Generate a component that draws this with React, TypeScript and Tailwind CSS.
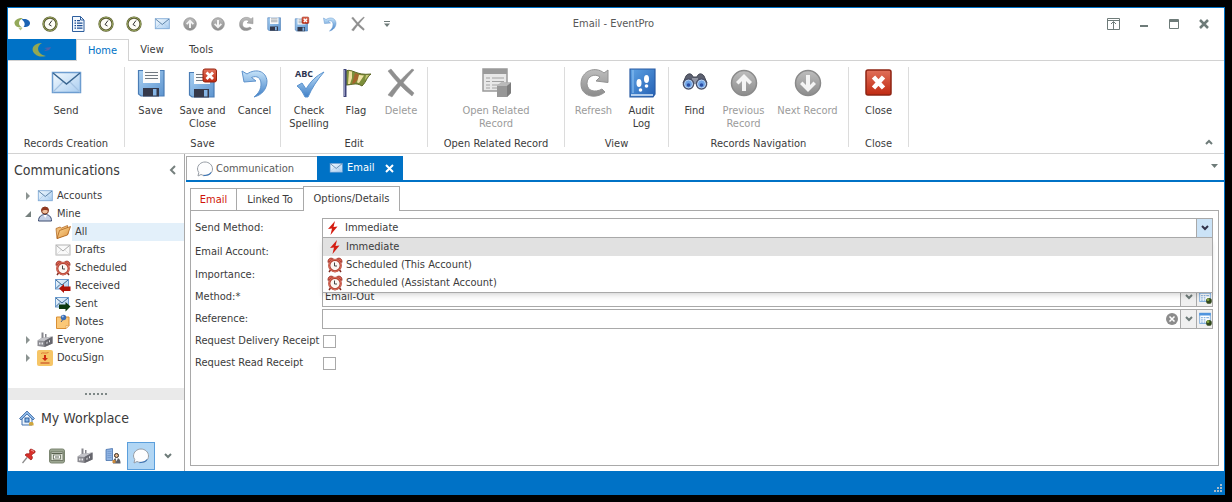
import type React from 'react'
import { useState } from 'react'

interface IconProps {
  size?: number
}

interface SvgProps extends IconProps {
  children: React.ReactNode
}

const Svg = ({ size = 16, children }: SvgProps) => (
  <svg
    width={size}
    height={size}
    viewBox="0 0 32 32"
    fill="none"
    className="shrink-0 overflow-visible"
    aria-hidden="true"
  >
    {children}
  </svg>
)

// Gradients shared by all the icons
const Gradients = () => (
  <svg width="0" height="0" className="absolute" aria-hidden="true">
    <defs>
      <linearGradient id="paper" x1="0" y1="0" x2="1" y2="1">
        <stop offset="0" stopColor="#f4fafe" />
        <stop offset="1" stopColor="#a9cdf0" />
      </linearGradient>
      <linearGradient id="blue" x1="0" y1="0" x2="0" y2="1">
        <stop offset="0" stopColor="#c6e3f9" />
        <stop offset="1" stopColor="#3f80c8" />
      </linearGradient>
      <linearGradient id="disk" x1="0" y1="0" x2="1" y2="1">
        <stop offset="0" stopColor="#a9d0f2" />
        <stop offset="1" stopColor="#5d94cf" />
      </linearGradient>
      <linearGradient id="book" x1="0" y1="0" x2="1" y2="1">
        <stop offset="0" stopColor="#5fa3e4" />
        <stop offset="1" stopColor="#2360b4" />
      </linearGradient>
      <linearGradient id="red" x1="0" y1="0" x2="0" y2="1">
        <stop offset="0" stopColor="#e0705a" />
        <stop offset="1" stopColor="#c02a12" />
      </linearGradient>
      <linearGradient id="gray" x1="0" y1="0" x2="0" y2="1">
        <stop offset="0" stopColor="#bdbdbd" />
        <stop offset="1" stopColor="#8c8c8c" />
      </linearGradient>
      <linearGradient id="folder" x1="0" y1="0" x2="1" y2="1">
        <stop offset="0" stopColor="#fcdc9e" />
        <stop offset="1" stopColor="#e0923a" />
      </linearGradient>
    </defs>
  </svg>
)

const MailIcon = ({ size }: IconProps) => (
  <Svg size={size}>
    <rect x="2.5" y="5.500" width="28" height="20" fill="url(#paper)" stroke="#6d9dd0" strokeWidth="1.500" />
    <path d="M3 25 L13 15 M30 25 L20 15" stroke="#a5c3e2" strokeWidth="1.200" />
    <path d="M3 6 L16.500 17 L30 6" stroke="#3a6690" strokeWidth="1.500" />
  </Svg>
)

const DraftIcon = ({ size }: IconProps) => (
  <Svg size={size}>
    <rect x="2" y="6" width="28" height="20" fill="#fafafa" stroke="#b4b4b4" strokeWidth="2" />
    <path d="M3 25 L13 15 M29 25 L19 15" stroke="#dcdcdc" strokeWidth="1.500" />
    <path d="M3 7 L16 18 L29 7" stroke="#aaa" strokeWidth="2" />
  </Svg>
)

const ReceivedIcon = ({ size }: IconProps) => (
  <Svg size={size}>
    <rect x="1" y="3" width="26" height="19" fill="url(#paper)" stroke="#6d9dd0" strokeWidth="2" />
    <path d="M2 4 L14 14 L26 4 M2 21 L10 13" stroke="#3a6690" strokeWidth="2" />
    <path d="M8 21 L18 12 V17 H31 V26 H18 V30 Z" fill="#b01208" />
  </Svg>
)

const SentIcon = ({ size }: IconProps) => (
  <Svg size={size}>
    <rect x="1" y="3" width="26" height="19" fill="url(#paper)" stroke="#6d9dd0" strokeWidth="2" />
    <path d="M2 4 L14 14 L26 4 M2 21 L10 13" stroke="#3a6690" strokeWidth="2" />
    <path d="M31 21 L21 12 V17 H8 V26 H21 V31 Z" fill="#0c3a10" />
  </Svg>
)

const SaveIcon = ({ size }: IconProps) => (
  <Svg size={size}>
    <path d="M3.500 3.500 H29 V29 H6 L3.500 27 Z" fill="url(#disk)" stroke="#4a7cb5" strokeWidth="1.200" />
    <rect x="8" y="3" width="17" height="13" fill="#fbfbfb" />
    <path d="M10 5.500 H23 M10 8.500 H23 M10 11.500 H23" stroke="#707880" strokeWidth="1.100" />
    <rect x="8" y="21" width="16" height="8.500" fill="#34384a" />
    <rect x="18" y="22" width="3.500" height="6.500" fill="#86b6e6" />
  </Svg>
)

const SaveCloseIcon = ({ size }: IconProps) => (
  <Svg size={size}>
    <path d="M2.500 5.500 H27 V30 H5 L2.500 28 Z" fill="url(#disk)" stroke="#4a7cb5" strokeWidth="1.200" />
    <rect x="7" y="5" width="16" height="12" fill="#fbfbfb" />
    <path d="M9 7.500 H18 M9 10.500 H18 M9 13.500 H18" stroke="#707880" strokeWidth="1.100" />
    <rect x="7" y="22" width="15" height="8.500" fill="#34384a" />
    <rect x="17" y="23" width="3.500" height="6.500" fill="#86b6e6" />
    <rect x="16" y="2" width="13.500" height="13" rx="2" fill="url(#red)" stroke="#96230f" />
    <path d="M19.500 5.500 L26 12 M26 5.500 L19.500 12" stroke="#fff" strokeWidth="2.800" />
  </Svg>
)

const UndoIcon = ({ size }: IconProps) => (
  <Svg size={size}>
    <path
      d="M3 4 L5 15 L17 14 L12.500 10.500 C18 8 22 11 22 17 C22 22 20 26 15 30 C23 28 28 22 28 14 C27 4 17 1 8 7 Z"
      fill="url(#blue)"
      stroke="#5f93cc"
      strokeWidth="1"
      strokeLinejoin="round"
    />
  </Svg>
)

const SpellIcon = ({ size }: IconProps) => (
  <Svg size={size}>
    <text x="2" y="10" fontSize="9" fontWeight="700" fill="#2c3350" fontFamily="'Open Sans', sans-serif">
      ABC
    </text>
    <path
      d="M4 19 L9 16 L13 22 C18 14 23 9 31 5 C24 13 19 21 15 30 L12 30 C10 26 8 22 4 19 Z"
      fill="url(#blue)"
      stroke="#5b93cf"
    />
  </Svg>
)

const FlagIcon = ({ size }: IconProps) => (
  <Svg size={size}>
    <path d="M6 4 C12 1 16 9 31 7 C26 11 27 14 22 19 C16 15 12 18 6 18 Z" fill="#7c8f3a" stroke="#5d6524" />
    <path d="M9 4 L12 4.500 V11 L10 17 H8 Z" fill="#efe0a0" />
    <path d="M15 6 L19 7.500 L18 12 L15 16 L12 17 Z" fill="#a4652c" />
    <path d="M19 8 L24 8.500 L19 16 L17 15.500 Z" fill="#f1e3a8" />
    <path d="M26 8 L29 8 L25 13 Z" fill="#c6c878" />
    <path d="M5 2 V30" stroke="#3f4478" strokeWidth="3" />
    <path d="M4.500 3 V29" stroke="#9094bd" />
  </Svg>
)

const CrossIcon = ({ size }: IconProps) => (
  <Svg size={size}>
    <path
      d="M3 4 L6 2 C13 11 21 19 29 26 L27 29 C18 22 10 13 3 4 Z M3 28 C9 20 17 11 27 2 L29 3 C21 12 14 20 7 30 Z"
      fill="#8f8f8f"
      stroke="#8a8a8a"
      strokeWidth=".5"
    />
  </Svg>
)

const RelatedIcon = ({ size }: IconProps) => (
  <Svg size={size}>
    <rect x="3" y="2" width="24" height="22" fill="#e8e8e8" stroke="#9a9a9a" strokeWidth="1.500" />
    <rect x="3" y="2" width="24" height="5" fill="#9a9a9a" />
    <path
      d="M6 11 H10 M12 11 H24 M6 14.500 H10 M12 14.500 H24 M6 18 H10 M12 18 H24 M6 21 H10 M12 21 H20"
      stroke="#a2a2a2"
      strokeWidth="1.200"
    />
    <path d="M17 19 L21 15.500 H31 V26 L27 30 H17 Z" fill="#979797" />
    <path d="M17 19 L21 15.500 H31 L27 19 Z" fill="#bababa" />
    <path d="M27 19 L31 15.500 V26 L27 30 Z" fill="#7c7c7c" />
  </Svg>
)

const RefreshIcon = ({ size }: IconProps) => (
  <Svg size={size}>
    <path
      d="M26 6 C18 -1 3 3 3 17 C3 29 17 33 27 25 L24 22 C17 26 9 24 9 16.500 C9 9 17 6 22 10 L18 14 L30 15.500 L30 3 Z"
      fill="url(#gray)"
      stroke="#929292"
      strokeWidth="1"
      strokeLinejoin="round"
    />
  </Svg>
)

const AuditIcon = ({ size }: IconProps) => (
  <Svg size={size}>
    <path d="M4 2 H29 V27 L27 30 H4 Z" fill="url(#book)" stroke="#2a5ca4" strokeWidth="1.200" />
    <path d="M5 28 H27" stroke="#dcebfa" strokeWidth="1.500" />
    <path d="M7 3 V26" stroke="#86bdf0" strokeWidth="1.200" />
    <ellipse cx="13" cy="16" rx="2.500" ry="4" fill="#fff" />
    <ellipse cx="14.500" cy="23" rx="1.800" ry="1.800" fill="#fff" />
    <ellipse cx="20.500" cy="12" rx="2.500" ry="4" fill="#fff" />
    <ellipse cx="20.500" cy="19" rx="1.800" ry="1.800" fill="#fff" />
  </Svg>
)

const FindIcon = ({ size }: IconProps) => (
  <Svg size={size}>
    <path d="M7 9 C9 6 13 6 14 10 H18 C19 6 23 6 25 9 L28 16 H4 Z" fill="#5c6070" stroke="#444854" />
    <rect x="13" y="11" width="6" height="5" fill="#9296a4" />
    <circle cx="9.500" cy="17" r="5.800" fill="#4a5068" />
    <circle cx="22.500" cy="17" r="5.800" fill="#4a5068" />
    <circle cx="9.500" cy="17" r="4" fill="#6fa3e6" stroke="#b9d4f4" />
    <circle cx="22.500" cy="17" r="4" fill="#6fa3e6" stroke="#b9d4f4" />
    <circle cx="9.500" cy="18" r="1.800" fill="#2c4fa5" />
    <circle cx="22.500" cy="18" r="1.800" fill="#2c4fa5" />
  </Svg>
)

const UpIcon = ({ size }: IconProps) => (
  <Svg size={size}>
    <circle cx="16" cy="16" r="12.500" fill="url(#gray)" stroke="#8a8a8a" strokeWidth="1.500" />
    <path d="M16 7 L24 15 L21.500 17.500 L18 14 V24 H14 V14 L10.500 17.500 L8 15 Z" fill="#f4f4f4" />
  </Svg>
)

const DownIcon = ({ size }: IconProps) => (
  <Svg size={size}>
    <circle cx="16" cy="16" r="12.500" fill="url(#gray)" stroke="#8a8a8a" strokeWidth="1.500" />
    <path d="M16 25 L24 17 L21.500 14.500 L18 18 V8 H14 V18 L10.500 14.500 L8 17 Z" fill="#f4f4f4" />
  </Svg>
)

const CloseRedIcon = ({ size }: IconProps) => (
  <Svg size={size}>
    <rect x="3" y="3" width="25" height="25" rx="2" fill="url(#red)" stroke="#8e2413" strokeWidth="1.500" />
    <path d="M10.500 10 L20.500 21 M20.500 10 L10.500 21" stroke="#fff" strokeWidth="4.500" />
  </Svg>
)

const ClockIcon = ({ size }: IconProps) => (
  <Svg size={size}>
    <circle cx="16" cy="16" r="13" fill="#fdfdf6" stroke="#5b5a34" strokeWidth="4.500" />
    <circle cx="16" cy="16" r="13.500" stroke="#94a35a" strokeWidth="2" />
    <path d="M20 9 L14 17 L19 20" stroke="#333" strokeWidth="2" />
  </Svg>
)

const ReportIcon = ({ size }: IconProps) => (
  <Svg size={size}>
    <path d="M5 1 H21 L28 8 V31 H5 Z" fill="#f3f8fe" stroke="#2e5f9e" strokeWidth="2" />
    <path d="M21 1 V8 H28" stroke="#2e5f9e" strokeWidth="2" />
    <path
      d="M9 9 H12 M14 9 H20 M9 14 H12 M14 14 H25 M9 19 H12 M14 19 H25 M9 24 H12 M14 24 H25"
      stroke="#1d4d92"
      strokeWidth="2.500"
    />
  </Svg>
)

const LogoIcon = ({ size }: IconProps) => (
  <Svg size={size}>
    <path d="M18 4 C8 3 0 9 1 15 C2 21 8 24 17 23 C9 20 6 10 18 4 Z" fill="#93a95a" />
    <path d="M15 7 C23 4 32 8 32 14 C32 20 26 23 19 22 C23 18 22 11 15 7 Z" fill="#1c63b4" />
    <path d="M9 24 L17 24 L13 29 Z" fill="#b8c58a" />
  </Svg>
)

const AlarmIcon = ({ size }: IconProps) => (
  <Svg size={size}>
    <path d="M2 11 C1 3 8 0 13 4 Z M30 11 C31 3 24 0 19 4 Z" fill="#d9604e" stroke="#8f2a20" strokeWidth="1.500" />
    <path d="M7 26 L4 30 M25 26 L28 30" stroke="#7e2a20" strokeWidth="3" />
    <circle cx="16" cy="17" r="11.500" fill="#fbf6f2" stroke="#b03a2a" strokeWidth="4.500" />
    <circle cx="16" cy="17" r="12" stroke="#e98a78" strokeWidth="1.500" />
    <path d="M15 11 V18 H20" stroke="#444" strokeWidth="2" />
  </Svg>
)

const PersonIcon = ({ size }: IconProps) => (
  <Svg size={size}>
    <path d="M3 30 C3 21 9 17 16 17 C24 17 29 21 29 30 Z" fill="#c3cfe4" stroke="#3c4c70" strokeWidth="2" />
    <path d="M13 18 L16.500 24 L20 18 Z" fill="#fff" />
    <circle cx="16" cy="9" r="7" fill="#f0bf9c" stroke="#7a3a22" strokeWidth="2" />
    <path d="M9 11 C7 -1 25 -1 23 10 C20 8 14 6 9 11 Z" fill="#943a20" />
  </Svg>
)

const FolderIcon = ({ size }: IconProps) => (
  <Svg size={size}>
    <path d="M2 9 L10 6 L13 8 L25 3 L26 20 L4 29 Z" fill="#f0bd78" stroke="#b0661e" strokeWidth="1.500" />
    <path d="M9 13 L31 5 L25 22 L4 29 Z" fill="url(#folder)" stroke="#a85c16" strokeWidth="1.500" />
  </Svg>
)

const NoteIcon = ({ size }: IconProps) => (
  <Svg size={size}>
    <path d="M3 6 H28 V23 L22 29 H3 Z" fill="#fbc877" stroke="#d98f34" strokeWidth="2" />
    <path d="M28 23 H22 V29 Z" fill="#fff0d2" stroke="#d98f34" />
    <circle cx="17" cy="7" r="5.500" fill="#3c6db4" />
    <circle cx="15.500" cy="5" r="2" fill="#a8c8ee" />
    <path d="M12 16 L15 12" stroke="#47587a" strokeWidth="2" />
  </Svg>
)

const FactoryIcon = ({ size }: IconProps) => (
  <Svg size={size}>
    <path d="M9 1 H13 V15 H9 Z M16 4 H19 V14 H16 Z" fill="#85858b" />
    <path d="M1 17 L9 12 L31 9 V23 L15 30 L1 28 Z" fill="#8b8b91" />
    <path d="M1 17 L9 12 L31 9 L15 18 Z" fill="#c4c4c9" />
    <path d="M15 18 L31 9 V23 L15 30 Z" fill="#66666d" />
    <path d="M4 21 H7 V25 H4 Z M9 21 H12 V25 H9 Z M19 20 L21 19 V23 L19 24 Z M24 17 L26 16 V20 L24 21 Z" fill="#e6e6ea" />
  </Svg>
)

const DocuSignIcon = ({ size }: IconProps) => (
  <Svg size={size}>
    <rect x="0" y="0" width="32" height="32" rx="4" fill="#f6c566" />
    <path d="M8 7 C12 4 16 8 23 5" stroke="#d1622a" strokeWidth="1.500" />
    <path d="M14 10 H18 V16 H22 L16 22 L10 16 H14 Z" fill="#d02a12" />
    <path d="M7 26 H25" stroke="#c03a1a" strokeWidth="2" />
  </Svg>
)

const HouseIcon = ({ size }: IconProps) => (
  <Svg size={size}>
    <path d="M6 16 V30 H26 V16 L16 6 Z" fill="#eaf3fc" stroke="#4473ae" strokeWidth="2" />
    <path d="M1 17 L16 2 L31 17 L28 20 L16 8 L4 20 Z" fill="#8bb6e6" stroke="#2d5d9c" strokeWidth="1.500" />
    <rect x="12" y="16" width="8" height="8" fill="#86b6e6" stroke="#2d5d9c" strokeWidth="2" />
    <path d="M20 31 C19 25 22 23 25 24 C28 23 30 26 29 31 Z" fill="#cfa63c" />
  </Svg>
)

const PinIcon = ({ size }: IconProps) => (
  <Svg size={size}>
    <path d="M3 30 L12 19" stroke="#8b8b8b" strokeWidth="2.500" />
    <path
      d="M8 14 C10 11 13 11 16 12 L18 8 C16 6 17 3 20 2 L28 6 C29 9 27 11 24 11 L21 15 C24 18 23 22 20 24 Z"
      fill="#d9302a"
      stroke="#9e1a16"
      strokeWidth="1.500"
    />
    <path d="M20 4 L26 7" stroke="#f59b95" strokeWidth="2" />
  </Svg>
)

const DrawerIcon = ({ size }: IconProps) => (
  <Svg size={size}>
    <rect x="1" y="2" width="30" height="28" rx="4" fill="#9ba591" stroke="#7c8672" strokeWidth="2" />
    <rect x="4" y="8" width="24" height="17" fill="#dfe3d8" stroke="#59624f" strokeWidth="1.500" />
    <rect x="9" y="14" width="14" height="8" fill="#fff" stroke="#59624f" strokeWidth="1.500" />
    <path d="M5 11 H27 M12 18 H20" stroke="#59624f" strokeWidth="2" />
  </Svg>
)

const BuildingIcon = ({ size }: IconProps) => (
  <Svg size={size}>
    <path d="M2 3 L15 1 V25 H2 Z" fill="#8fb3e2" stroke="#3f6ba8" strokeWidth="1.500" />
    <path d="M5 7 H13 M5 11 H13 M5 15 H13 M5 19 H13" stroke="#5f87c0" strokeWidth="1" />
    <circle cx="23" cy="15" r="4" fill="#e9b78c" stroke="#33261c" strokeWidth="2" />
    <path d="M16 31 C16 23 19 20 23 20 C28 20 31 23 31 31 Z" fill="#5d6068" />
    <path d="M21 20 L23 27 L26 20 Z" fill="#fff" />
    <rect x="15" y="24" width="6" height="6" fill="#c8873a" />
  </Svg>
)

const BubbleIcon = ({ size }: IconProps) => (
  <Svg size={size}>
    <path
      d="M16 2 C24 2 31 8 31 16 C31 24 24 29 16 29 C13 29 10 28 8 27 L2 30 L3.500 23 C2 21 1 18 1 16 C1 8 8 2 16 2 Z"
      fill="#fdfdfe"
      stroke="#979da5"
      strokeWidth="2"
    />
    <path d="M28 23 C25 28 20 29 13 29" stroke="#3c76b8" strokeWidth="2.500" />
  </Svg>
)

const BoltIcon = ({ size }: IconProps) => (
  <Svg size={size}>
    <path d="M20 2 L6 18 L14 17 L11 30 L25 13 L17 14 Z" fill="#d41c10" />
  </Svg>
)

const RecordIcon = ({ size }: IconProps) => (
  <Svg size={size}>
    <rect x="4" y="3" width="24" height="23" fill="#fff" stroke="#6da2d8" strokeWidth="2" />
    <rect x="3" y="2" width="26" height="6" fill="#4f94de" />
    <path d="M7 13 H11 M13 13 H17 M19 13 H25 M7 18 H11 M13 18 H17 M7 23 H11 M13 23 H17" stroke="#8ab4e0" strokeWidth="3" />
    <circle cx="25" cy="25" r="6.500" fill="#32481c" />
    <circle cx="23" cy="22" r="3" fill="#86a840" />
  </Svg>
)

const Chevron = ({ color = '#6e7b79' }: { color?: string }) => (
  <svg width="8" height="6" viewBox="0 0 8 6" fill="none" aria-hidden="true">
    <path d="M1 1 L4 4 L7 1" stroke={color} strokeWidth="2" />
  </svg>
)

const quickItems = [
  { label: 'EventPro', icon: LogoIcon },
  { label: 'Recent', icon: ClockIcon },
  { label: 'Report', icon: ReportIcon },
  { label: 'Reminders', icon: ClockIcon },
  { label: 'Schedule', icon: ClockIcon },
  { label: 'Send', icon: MailIcon },
  { label: 'Previous record', icon: UpIcon },
  { label: 'Next record', icon: DownIcon },
  { label: 'Refresh', icon: RefreshIcon },
  { label: 'Save', icon: SaveIcon },
  { label: 'Save and close', icon: SaveCloseIcon },
  { label: 'Cancel', icon: UndoIcon },
  { label: 'Delete', icon: CrossIcon },
]

interface RibbonItem {
  label: string
  icon: React.FC<IconProps>
  width: string
  disabled?: boolean
}

const ribbonGroups: { title: string; width: string; items: RibbonItem[] }[] = [
  { title: 'Records Creation', width: 'w-[117px]', items: [{ label: 'Send', icon: MailIcon, width: 'w-12' }] },
  {
    title: 'Save',
    width: 'w-[156px]',
    items: [
      { label: 'Save', icon: SaveIcon, width: 'w-[46px]' },
      { label: 'Save and Close', icon: SaveCloseIcon, width: 'w-[58px]' },
      { label: 'Cancel', icon: UndoIcon, width: 'w-[46px]' },
    ],
  },
  {
    title: 'Edit',
    width: 'w-[147px]',
    items: [
      { label: 'Check Spelling', icon: SpellIcon, width: 'w-[54px]' },
      { label: 'Flag', icon: FlagIcon, width: 'w-10' },
      { label: 'Delete', icon: CrossIcon, width: 'w-[50px]', disabled: true },
    ],
  },
  {
    title: 'Open Related Record',
    width: 'w-[137px]',
    items: [{ label: 'Open Related Record', icon: RelatedIcon, width: 'w-20', disabled: true }],
  },
  {
    title: 'View',
    width: 'w-[104px]',
    items: [
      { label: 'Refresh', icon: RefreshIcon, width: 'w-[50px]', disabled: true },
      { label: 'Audit Log', icon: AuditIcon, width: 'w-[46px]' },
    ],
  },
  {
    title: 'Records Navigation',
    width: 'w-[180px]',
    items: [
      { label: 'Find', icon: FindIcon, width: 'w-10' },
      { label: 'Previous Record', icon: UpIcon, width: 'w-[58px]', disabled: true },
      { label: 'Next Record', icon: DownIcon, width: 'w-[70px]', disabled: true },
    ],
  },
  { title: 'Close', width: 'w-[60px]', items: [{ label: 'Close', icon: CloseRedIcon, width: 'w-12' }] },
]

const mineItems = [
  { label: 'All', icon: FolderIcon },
  { label: 'Drafts', icon: DraftIcon },
  { label: 'Scheduled', icon: AlarmIcon },
  { label: 'Received', icon: ReceivedIcon },
  { label: 'Sent', icon: SentIcon },
  { label: 'Notes', icon: NoteIcon },
]

const sendMethods = [
  { label: 'Immediate', icon: BoltIcon },
  { label: 'Scheduled (This Account)', icon: AlarmIcon },
  { label: 'Scheduled (Assistant Account)', icon: AlarmIcon },
]

const workplaceItems = [
  { label: 'Pinned', icon: PinIcon },
  { label: 'Files', icon: DrawerIcon },
  { label: 'Venues', icon: FactoryIcon },
  { label: 'Contacts', icon: BuildingIcon },
  { label: 'Communications', icon: BubbleIcon },
]

const TitleBar = () => (
  <header className="flex h-[31px] items-center">
    <div className="flex flex-1 items-center">
      {quickItems.map(({ label, icon: Icon }) => (
        <button key={label} aria-label={label} className="flex w-7 justify-center">
          <Icon />
        </button>
      ))}
      <button aria-label="Customize toolbar" className="flex w-[30px] justify-center">
        <svg width="6" height="6" viewBox="0 0 6 6" aria-hidden="true">
          <path d="M0 0 H6 V1 H0 Z M0 2.500 H6 L3 6 Z" fill="#6e7b79" />
        </svg>
      </button>
    </div>
    <h1 className="text-[#585858]">Email - EventPro</h1>
    <div className="flex flex-1 items-center justify-end pr-[5px] text-[#6e7b79]">
      <button aria-label="Ribbon display options" className="flex w-8 justify-center">
        <svg width="13" height="12" viewBox="0 0 13 12" fill="none" stroke="currentColor" aria-hidden="true">
          <path d="M.5 .5 H12.500 V11.500 H.5 Z M.5 2.500 H12.500 M6.500 11 V4 M4 6 L6.500 3.500 L9 6" />
        </svg>
      </button>
      <button aria-label="Minimize" className="flex w-[30px] justify-center">
        <svg width="8" height="10" viewBox="0 0 8 10" aria-hidden="true">
          <path d="M0 6 H8 V8 H0 Z" fill="currentColor" />
        </svg>
      </button>
      <button aria-label="Maximize" className="flex w-[30px] justify-center">
        <svg width="10" height="10" viewBox="0 0 10 10" fill="none" stroke="currentColor" aria-hidden="true">
          <path d="M.5 .5 H9.500 V9.500 H.5 Z M0 1.500 H10 M0 2.500 H10" />
        </svg>
      </button>
      <button aria-label="Close window" className="flex w-[30px] justify-center">
        <svg width="10" height="10" viewBox="0 0 10 10" fill="none" stroke="currentColor" aria-hidden="true">
          <path d="M1 1 L9 9 M9 1 L1 9" strokeWidth="2.500" />
        </svg>
      </button>
    </div>
  </header>
)

const Ribbon = () => (
  <>
    <nav className="flex h-[22px] border-b border-[#d2d2d2]">
      <button aria-label="File" className="flex w-[68px] items-center justify-center bg-[#0072c6]">
        <svg width="20" height="16" viewBox="0 0 20 16" aria-hidden="true">
          <path d="M10 1 C1 1 -2 8 3 12 C6 15 10 15 14 14 C6 13 3 5 10 1 Z" fill="#93a852" />
          <path d="M12 6 L19 5 C18 8 16 9 12 9 L15 7 Z" fill="#4a62ae" />
        </svg>
      </button>
      <button className="-mb-px w-[53px] border border-b-0 border-[#d2d2d2] bg-white text-[#0072c6]">Home</button>
      <button className="w-[46px]">View</button>
      <button className="w-[52px]">Tools</button>
    </nav>
    <div className="flex h-[93px] border-b border-[#d2d2d2] pt-[6px]">
      {ribbonGroups.map((group) => (
        <section
          key={group.title}
          className={`flex h-20 shrink-0 flex-col items-center justify-between border-r border-[#dcdcdc] ${group.width}`}
        >
          <div className="flex">
            {group.items.map(({ label, icon: Icon, width, disabled }) => (
              <button
                key={label}
                disabled={disabled}
                className={`flex flex-col items-center leading-[13px] ${width} ${disabled ? 'text-[#9b9b9b]' : ''}`}
              >
                <Icon size={32} />
                <span className="pt-[5px]">{label}</span>
              </button>
            ))}
          </div>
          <h2 className="leading-[6px]">{group.title}</h2>
        </section>
      ))}
      <button aria-label="Collapse ribbon" className="mt-auto mr-[11px] mb-2 ml-auto rotate-180">
        <Chevron />
      </button>
    </div>
  </>
)

const TreeArrow = ({ open }: { open?: boolean }) => (
  <svg width="6" height="8" viewBox="0 0 6 8" className="shrink-0" aria-hidden="true">
    {open ? <path d="M6 1 V7 H0 Z" fill="#76807e" /> : <path d="M1 0 L5 4 L1 8 Z" fill="#8b9391" />}
  </svg>
)

const TreeRow = ({ label, icon: Icon, open }: { label: string; icon: React.FC<IconProps>; open?: boolean }) => (
  <button className="flex h-[18px] w-full items-center pl-[17px]">
    <TreeArrow open={open} />
    <span className="mr-1 ml-[6px]">
      <Icon />
    </span>
    {label}
  </button>
)

const Sidebar = () => {
  const [selected, setSelected] = useState('All')

  return (
    <aside className="flex w-[177px] shrink-0 flex-col border-r border-[#a9a9a9]">
      <div className="flex h-8 items-center justify-between pr-2 pl-[6px]">
        <h2 className="text-[14px]">Communications</h2>
        <button aria-label="Collapse panel">
          <svg width="7" height="10" viewBox="0 0 7 10" fill="none" aria-hidden="true">
            <path d="M6 1 L2 5 L6 9" stroke="#76807e" strokeWidth="2" />
          </svg>
        </button>
      </div>
      <ul className="flex-1 pt-px">
        <li>
          <TreeRow label="Accounts" icon={MailIcon} />
        </li>
        <li>
          <TreeRow label="Mine" icon={PersonIcon} open />
          <ul>
            {mineItems.map(({ label, icon: Icon }) => (
              <li key={label} className="flex items-center pl-[47px]">
                <Icon />
                <button
                  className={`ml-px h-[18px] flex-1 pl-[3px] text-left ${selected === label ? 'bg-[#e3f0fa]' : ''}`}
                  onClick={() => setSelected(label)}
                >
                  {label}
                </button>
              </li>
            ))}
          </ul>
        </li>
        <li>
          <TreeRow label="Everyone" icon={FactoryIcon} />
        </li>
        <li>
          <TreeRow label="DocuSign" icon={DocuSignIcon} />
        </li>
      </ul>
      <div className="flex h-3 items-center justify-center gap-[2px] bg-[#eaeaea]">
        {[0, 1, 2, 3, 4, 5].map((dot) => (
          <span key={dot} className="size-[2px] bg-[#7d8786]" />
        ))}
      </div>
      <div className="flex h-9 items-center gap-[6px] pl-[11px]">
        <HouseIcon />
        <h2 className="text-[14px]">My Workplace</h2>
      </div>
      <div className="flex h-[35px] items-end pb-px pl-[7px]">
        {workplaceItems.map(({ label, icon: Icon }) => (
          <button
            key={label}
            aria-label={label}
            className={`flex size-7 items-center justify-center border ${
              label === 'Communications' ? 'border-[#5b9fdc] bg-[#b1d6f4]' : 'border-transparent'
            }`}
          >
            <Icon />
          </button>
        ))}
        <button aria-label="More" className="flex h-7 w-[26px] items-center justify-center">
          <Chevron />
        </button>
      </div>
    </aside>
  )
}

const DropButton = ({ label, active }: { label: string; active?: boolean }) => (
  <button
    type="button"
    aria-label={label}
    className={`flex w-4 shrink-0 items-center justify-center border-l border-[#a9a9a9] ${
      active ? 'bg-[#cbe3f7]' : 'bg-[#f0f0f0]'
    }`}
  >
    <Chevron color={active ? '#32324a' : '#6e7b79'} />
  </button>
)

const RecordButton = ({ label }: { label: string }) => (
  <button
    type="button"
    aria-label={label}
    className="flex w-4 shrink-0 items-center justify-center border-l border-[#a9a9a9] bg-[#f0f0f0]"
  >
    <RecordIcon size={14} />
  </button>
)

interface FieldProps {
  id: string
  label: string
  tall?: boolean
  children: React.ReactNode
}

const Field = ({ id, label, tall, children }: FieldProps) => (
  <div className={`flex items-center ${tall ? 'h-6' : 'h-[22px]'}`}>
    <label htmlFor={id} className="w-[127px] shrink-0 whitespace-nowrap">
      {label}
    </label>
    {children}
  </div>
)

const EmailOptions = () => {
  const [method, setMethod] = useState('Immediate')
  const [reference, setReference] = useState('')
  const box = 'relative flex h-5 min-w-0 flex-1 border border-[#a9a9a9] bg-white'

  return (
    <form className="flex-1 border border-[#a9a9a9] py-[5px] pr-[5px] pl-1">
      <Field id="send-method" label="Send Method:" tall>
        <div className={box}>
          <span className="flex items-center pr-1 pl-[2px]">
            <BoltIcon />
          </span>
          <select
            id="send-method"
            className="flex-1 appearance-none outline-none"
            value={method}
            onChange={(e) => setMethod(e.target.value)}
          >
            {sendMethods.map(({ label }) => (
              <option key={label}>{label}</option>
            ))}
          </select>
          <DropButton label="Open send methods" active />
          {/* Opened list of send methods */}
          <ul className="absolute -inset-x-px top-[18px] z-10 border border-[#a9a9a9] bg-white shadow-md">
            {sendMethods.map(({ label, icon: Icon }) => (
              <li
                key={label}
                className={`flex h-[18px] items-center gap-[3px] pl-1 ${label === method ? 'bg-[#e1e1e1]' : ''}`}
                onClick={() => setMethod(label)}
              >
                <Icon />
                {label}
              </li>
            ))}
          </ul>
        </div>
      </Field>
      <Field id="account" label="Email Account:" tall>
        <div className={box}>
          <input id="account" className="min-w-0 flex-1 outline-none" />
        </div>
      </Field>
      <Field id="importance" label="Importance:">
        <div className={box}>
          <input id="importance" className="min-w-0 flex-1 outline-none" />
        </div>
      </Field>
      <Field id="method" label="Method:*">
        <div className={box}>
          <select id="method" className="flex-1 appearance-none pl-[2px] outline-none">
            <option>Email-Out</option>
          </select>
          <DropButton label="Open methods" />
          <RecordButton label="Edit method" />
        </div>
      </Field>
      <Field id="reference" label="Reference:">
        <div className={box}>
          <input
            id="reference"
            className="min-w-0 flex-1 pl-[2px] outline-none"
            value={reference}
            onChange={(e) => setReference(e.target.value)}
          />
          <button type="button" aria-label="Clear reference" className="px-[2px]" onClick={() => setReference('')}>
            <svg width="12" height="12" viewBox="0 0 12 12" aria-hidden="true">
              <circle cx="6" cy="6" r="6" fill="#8c8c8c" />
              <path d="M3.500 3.500 L8.500 8.500 M8.500 3.500 L3.500 8.500" stroke="#fff" strokeWidth="1.500" />
            </svg>
          </button>
          <DropButton label="Open references" />
          <RecordButton label="Edit reference" />
        </div>
      </Field>
      <Field id="delivery" label="Request Delivery Receipt">
        <input id="delivery" type="checkbox" className="ml-px size-[13px] appearance-none border border-[#a9a9a9]" />
      </Field>
      <Field id="read" label="Request Read Receipt">
        <input id="read" type="checkbox" className="ml-px size-[13px] appearance-none border border-[#a9a9a9]" />
      </Field>
    </form>
  )
}

const Content = () => (
  <main className="flex min-w-0 flex-1 flex-col pt-[2px] pl-px">
    <div className="flex h-[26px] border-b-2 border-[#0072c6]">
      <button className="flex w-[131px] items-center gap-[3px] border border-r-0 border-b-0 border-[#a9a9a9] pl-[10px] text-[#5a5a5a]">
        <BubbleIcon />
        Communication
      </button>
      <div className="flex w-[86px] items-center bg-[#0072c6] pl-3 text-white">
        <button className="flex items-center gap-1">
          <MailIcon size={14} />
          Email
        </button>
        <button aria-label="Close tab" className="ml-auto pr-[9px]">
          <svg width="9" height="9" viewBox="0 0 9 9" aria-hidden="true">
            <path d="M1 1 L8 8 M8 1 L1 8" stroke="#fff" strokeWidth="2" />
          </svg>
        </button>
      </div>
      <button aria-label="Tab list" className="mr-[6px] ml-auto pb-1">
        <svg width="7" height="4" viewBox="0 0 7 4" aria-hidden="true">
          <path d="M0 0 H7 L3.500 4 Z" fill="#6e7b79" />
        </svg>
      </button>
    </div>
    <div className="flex flex-1 flex-col pt-1 pr-[5px] pb-[5px] pl-1">
      <div className="flex h-6 items-end">
        <button className="h-[22px] w-[47px] border border-b-0 border-[#a9a9a9] text-[#d01507]">Email</button>
        <button className="h-[22px] w-[66px] border border-x-0 border-b-0 border-[#a9a9a9]">Linked To</button>
        <button className="z-10 -mb-px h-[25px] w-[97px] border border-b-0 border-[#a9a9a9] bg-white">
          Options/Details
        </button>
      </div>
      <EmailOptions />
    </div>
  </main>
)

const App: React.FC = () => (
  <div className="flex min-h-screen flex-col bg-black p-[7px] font-['DejaVu_Sans_Condensed','Noto_Sans',sans-serif] text-[11px] leading-[18px] text-[#3b3b3b]">
    <Gradients />
    <div className="flex flex-1 flex-col border border-[#0072c6] bg-white">
      <TitleBar />
      <Ribbon />
      <div className="flex flex-1">
        <Sidebar />
        <Content />
      </div>
      <footer className="flex h-[23px] items-end justify-end bg-[#0072c6] p-[2px]">
        <svg width="8" height="8" viewBox="0 0 8 8" aria-hidden="true">
          <path d="M6 0 H8 V2 H6 Z M3 3 H5 V5 H3 Z M6 3 H8 V5 H6 Z M0 6 H2 V8 H0 Z M3 6 H5 V8 H3 Z M6 6 H8 V8 H6 Z" fill="#a9bccb" />
        </svg>
      </footer>
    </div>
  </div>
)

export default App
